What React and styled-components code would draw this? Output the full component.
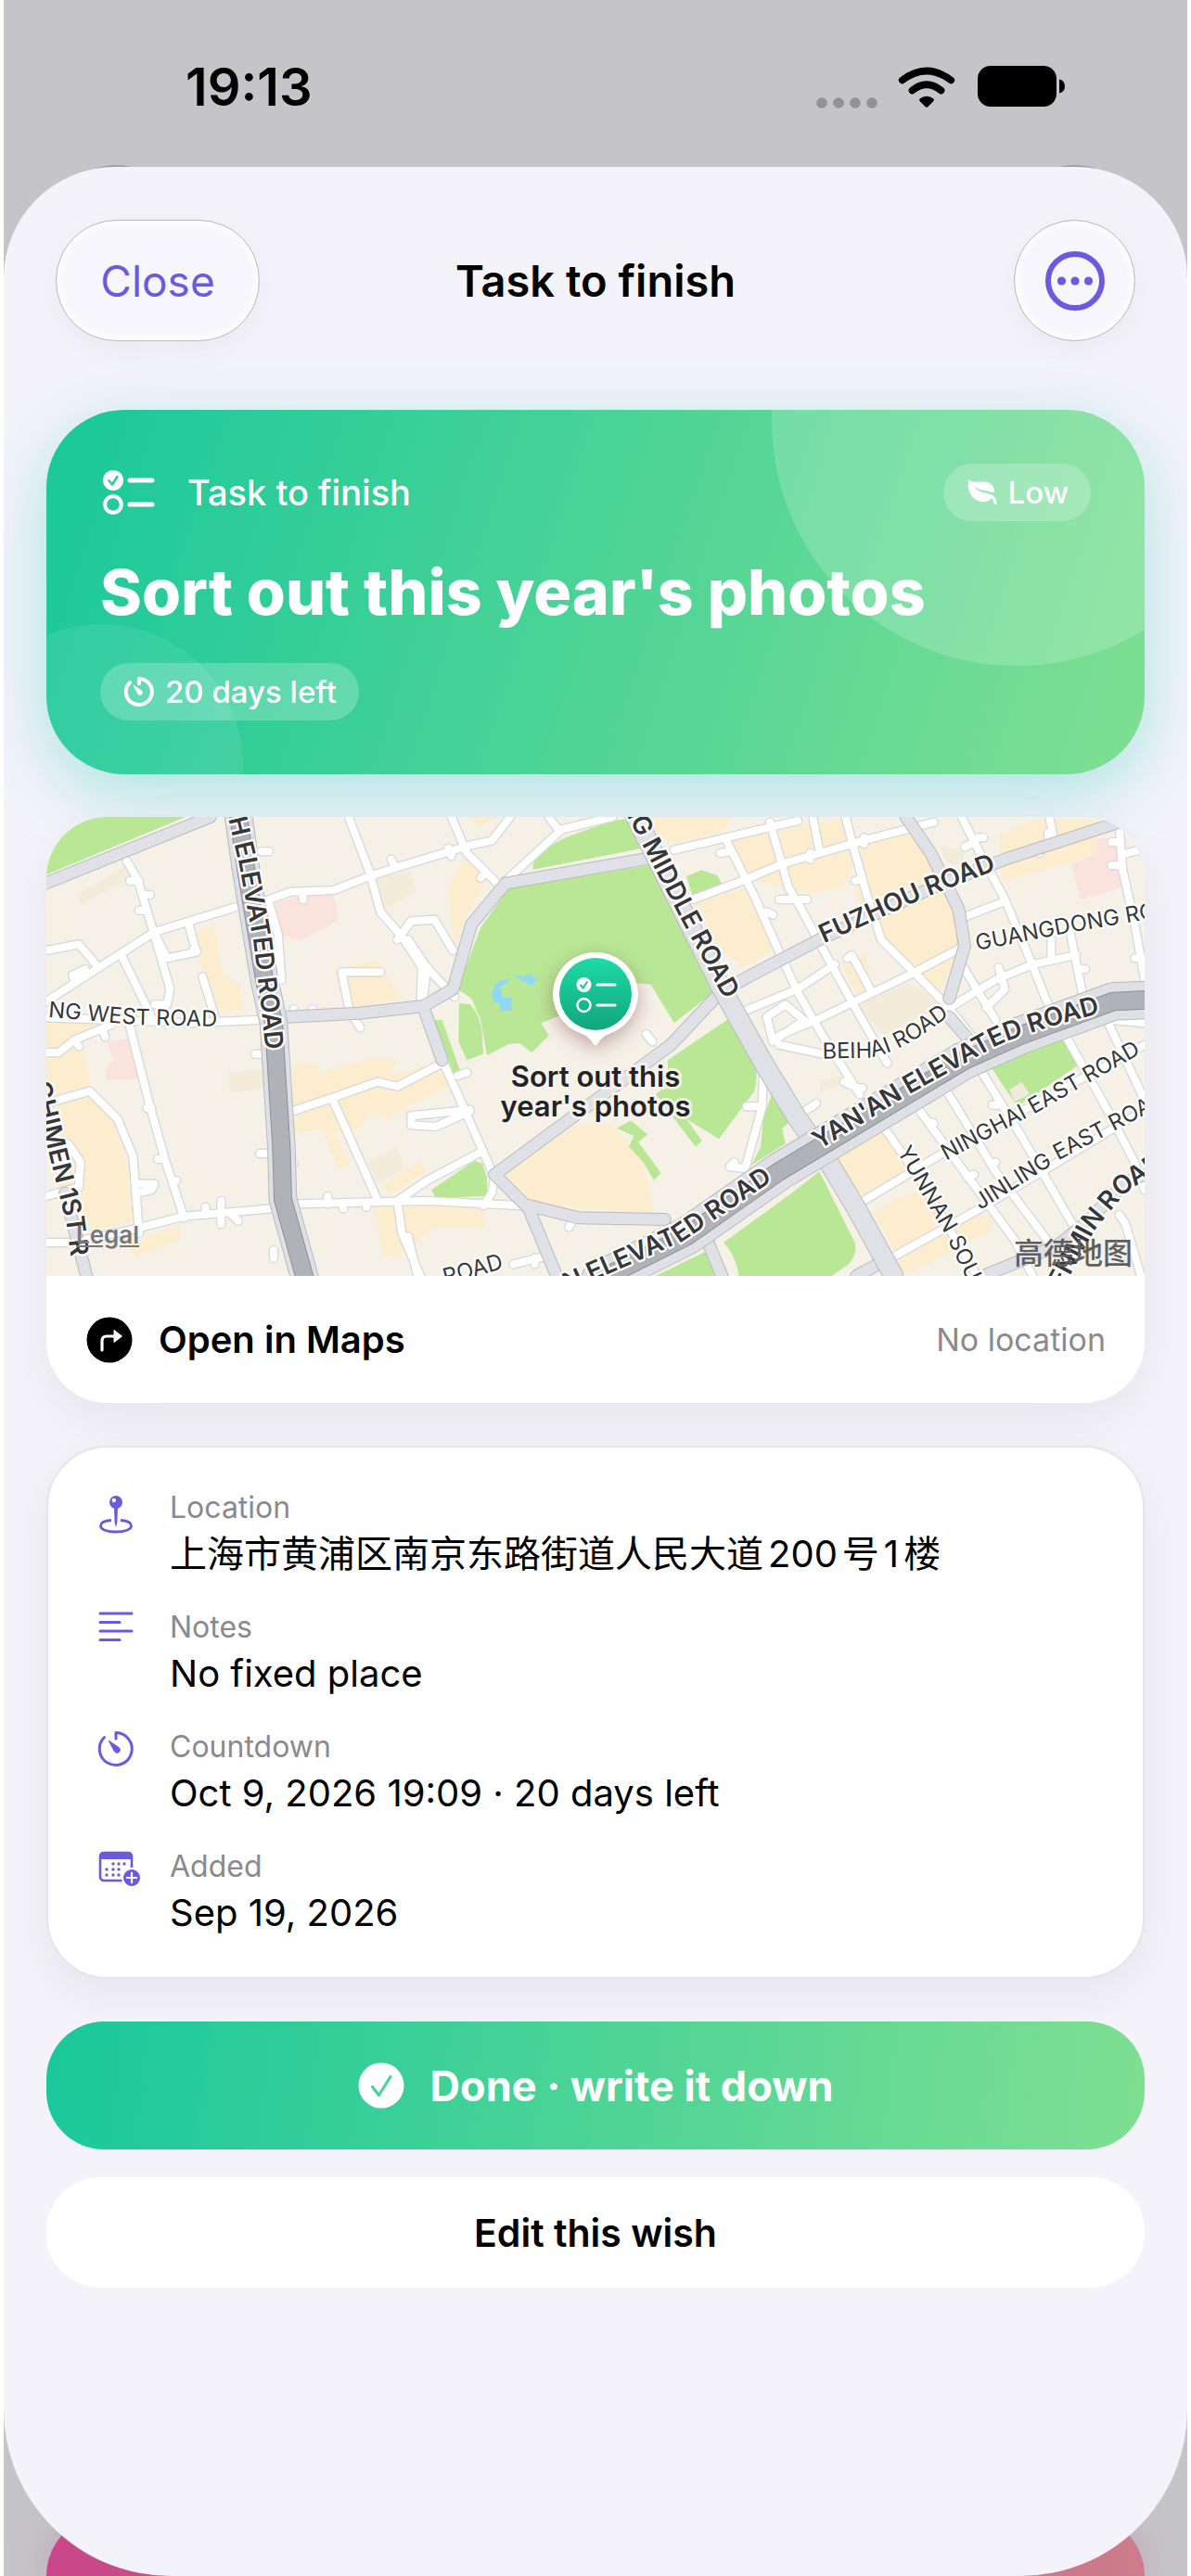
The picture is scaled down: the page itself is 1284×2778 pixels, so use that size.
import { styled, createGlobalStyle } from "styled-components";

const GlobalStyle = createGlobalStyle`
    *, *::before, *::after { box-sizing: border-box; }
    body {
        margin: 0;
        background: #fff;
        font-family: Inter, "Noto Sans CJK SC", sans-serif;
        color: #000;
    }
    h1, h2, p, dl, dt, dd { margin: 0; font-weight: inherit; }
    button { font-family: inherit; border: 0; padding: 0; cursor: pointer; }
    svg { display: block; flex: none; }
`

//Icons
const ChecklistIcon = ({ size, tick }) => (
    <svg width={size} height={size} viewBox="0 0 60 60" aria-hidden="true">
        <circle cx="14" cy="17" r="11" fill="currentColor" />
        <path d="M9.500 17.500l3.500 4 5.500-8.500" fill="none" stroke={tick} strokeWidth="2.600" strokeLinecap="round" strokeLinejoin="round" />
        <circle cx="14" cy="43" r="8.800" fill="none" stroke="currentColor" strokeWidth="4" />
        <path d="M32 17h24M32 43h24" stroke="currentColor" strokeWidth="5" strokeLinecap="round" />
    </svg>
)

const TimerIcon = ({ size, weight, top }) => (
    <svg width={size} height={size} viewBox={`0 ${top} 50 50`} aria-hidden="true">
        <path d="M12.500 11.500A17.500 17.500 0 1 0 25 6.500V13" fill="none" stroke="currentColor" strokeWidth={weight} strokeLinecap="round" strokeLinejoin="round" />
        <path d="M17.200 15.200L27.800 22.300A3.200 3.200 0 1 1 23.300 26.500Z" fill="currentColor" stroke="currentColor" strokeWidth="1" strokeLinejoin="round" />
    </svg>
)

const LeafIcon = () => (
    <svg width="40" height="32" viewBox="-3 0 40 32" aria-hidden="true">
        <path d="M2 2C6 6 12 4.500 18 4.500C26 4.500 30 9 30 16C26 16 22 14.500 17 13.600C14 13 12 12 10.500 10.500C10 10 9.200 10.600 9.700 11.300C12 14.500 15 15.400 19 16.200C23 17 26 18 28.500 20.500C26 24.500 21 27 15.500 26C6 24.200 0 15 2 2Z" fill="currentColor" />
        <path d="M27 20C29.500 22 31 25 31 27.500" fill="none" stroke="currentColor" strokeWidth="3.200" strokeLinecap="round" />
    </svg>
)

const PinIcon = () => (
    <svg width="50" height="50" viewBox="0 0 50 50" aria-hidden="true">
        <path d="M20 32.500C12 33 8.500 35.500 8.500 38.500C8.500 42.500 15.500 45 25 45S41.500 42.500 41.500 38.500C41.500 35.500 38 33 30 32.500" fill="none" stroke="currentColor" strokeWidth="2.800" />
        <path d="M23 18h4l-.600 17L25 40l-1.400-5Z" fill="currentColor" />
        <circle cx="25" cy="13" r="7" fill="currentColor" />
        <circle cx="22.800" cy="11" r="2.200" fill="#fff" />
    </svg>
)

const NotesIcon = () => (
    <svg width="50" height="50" viewBox="0 0 50 50" aria-hidden="true">
        <path d="M8 4h34M8 13.500h21M8 23h34M8 32.500h21" stroke="currentColor" strokeWidth="3" strokeLinecap="round" />
    </svg>
)

const CalendarIcon = () => (
    <svg width="54" height="50" viewBox="0 3 54 50" aria-hidden="true">
        <rect x="8" y="7" width="34" height="30" rx="4" fill="none" stroke="currentColor" strokeWidth="2.600" />
        <path d="M7 11q0-5 5-5h26q5 0 5 5v3H7Z" fill="currentColor" />
        <path d="M22 19h0M28 19h0M34 19h0M15 25h0M22 25h0M28 25h0M15 31h0M22 31h0M28 31h0" stroke="currentColor" strokeWidth="3.400" strokeLinecap="round" />
        <circle cx="42" cy="34" r="11" fill="#fff" />
        <circle cx="42" cy="34" r="9" fill="currentColor" />
        <path d="M42 28.800v10.400M36.800 34h10.400" stroke="#fff" strokeWidth="2.200" strokeLinecap="round" />
    </svg>
)

const TurnIcon = () => (
    <svg width="50" height="50" viewBox="0 0 50 50" aria-hidden="true">
        <circle cx="25" cy="25" r="24.500" />
        <path d="M17 36V26q0-5 5-5h9" fill="none" stroke="#fff" strokeWidth="3.200" strokeLinecap="round" />
        <path d="M30 14.500l8.500 6.500-8.500 6.500Z" fill="#fff" stroke="#fff" strokeLinejoin="round" />
    </svg>
)

const DoneIcon = () => (
    <svg width="50" height="50" viewBox="0 0 50 50" aria-hidden="true">
        <circle cx="25" cy="25" r="24.500" fill="#fff" />
        <path d="M15.500 26.500l7 9 12.500-20" fill="none" stroke="#4fd199" strokeWidth="3.200" strokeLinecap="round" strokeLinejoin="round" />
    </svg>
)

const MoreIcon = () => (
    <svg width="64" height="64" viewBox="0 0 64 64" aria-hidden="true">
        <circle cx="32" cy="32" r="29" fill="none" stroke="currentColor" strokeWidth="6" />
        <g fill="currentColor">
            <circle cx="17.500" cy="32" r="4.600" />
            <circle cx="32" cy="32" r="4.600" />
            <circle cx="46.500" cy="32" r="4.600" />
        </g>
    </svg>
)

const StatusIcons = () => (
    <svg width="270" height="50" viewBox="0 0 270 50" role="img" aria-label="No signal, Wi-Fi on, battery full">
        <g fill="#929196">
            <circle cx="6" cy="43" r="5.800" />
            <circle cx="24" cy="43" r="5.800" />
            <circle cx="42" cy="43" r="5.800" />
            <circle cx="60" cy="43" r="5.800" />
        </g>
        <g fill="none" stroke="#000" strokeLinecap="round">
            <path d="M92.700 18.500Q119 -1.500 145.300 18.500" strokeWidth="7.600" />
            <path d="M103.500 29.500Q119 17 134.500 29.500" strokeWidth="7.800" />
        </g>
        <path d="M111.500 38.500Q119 33 126.500 38.500Q127.500 40 126 41.500L120.500 47Q119 48.500 117.500 47L112 41.500Q110.500 40 111.500 38.500Z" />
        <rect x="174" y="3" width="85" height="44" rx="14" />
        <path d="M262 17.500q6 1.500 6 7.500t-6 7.500Z" />
    </svg>
)

//Map drawing, three units to the pixel
const parks = [
    "M30 33H480L30 220Z",
    "M1525 265L1980 190L2050 320L2135 470L2200 590L2060 700L1985 575L1940 570L1780 640L1630 700L1655 740L1600 795L1560 765L1525 768L1455 805L1435 690L1405 620L1360 590L1435 390Z",
    "M1605 203L1603 185Q1640 130 1720 95L1860 45L1905 40Q1940 90 1955 135Z",
    "M1365 635L1400 640Q1430 670 1438 720L1443 800L1390 820L1363 760Z",
    "M1285 690H1310L1370 860H1345Z",
    "M2040 820L2245 680L2320 800Q2335 860 2320 920L2205 1075L2100 1010L2150 1080L2130 1100L2000 930L2040 900Z",
    "M1275 1240L1415 1145L1440 1155L1455 1200V1260L1290 1265Z",
    "M1875 1040L1920 1015L1950 1040L1975 1060L1945 1085L2018 1185L1995 1208L1960 1150L1915 1100L1930 1065Z",
    "M2350 1000L2385 910L2445 1010L2410 1040L2420 1090L2310 1160L2340 1100Z",
    "M2100 225L2150 205L2200 222L2215 250L2120 290Z",
    "M2220 1410L2440 1250L2530 1180L2640 1400Q2660 1440 2625 1480L2570 1518H2270Q2260 1450 2220 1410Z",
    "M2000 1518L2160 1440L2195 1518Z",
    "M3080 835L3305 733L3370 835L3170 970Z",
]
const blocks = [
    "M510 400L575 390L600 540L655 575L665 660L580 655L520 480Z",
    "M960 530L1100 495L1180 620L1000 655Z",
    "M825 830H910L915 860L1060 820H1165L1140 870L1290 830L1260 930L1140 1010L1080 990L1020 1060L960 1050L1015 1160L975 1170L920 1040L825 1060Z",
    "M30 790L150 780L170 900L200 940L270 1050L320 1340L120 1380L30 1050Z",
    "M30 700H240L90 790H30Z",
    "M1085 1290H1445V1360L1280 1362L1180 1450L1120 1455Z",
    "M1120 1220L1240 1145L1260 1180L1140 1260Z",
    "M290 1420L460 1350L465 1400L320 1455Z",
    "M1380 170L1460 230L1380 370L1350 470L1330 260Z",
    "M1400 33H1490L1420 70Z",
    "M1200 880L1310 830L1340 900L1220 960Z",
    "M1520 1190L1740 1030L1860 1025L1960 1150L1995 1310L1750 1300L1585 1275Z",
    "M1950 33H2250L2220 80L2060 120L2000 90Z",
    "M2120 300L2290 265L2390 460L2280 520L2200 450Z",
    "M2240 110L2620 33L2660 130L2610 260L2500 280L2300 230Z",
    "M2650 130L2830 80L2920 200L3000 430L2920 600L2830 530L2730 430L2650 300Z",
    "M3110 90L3230 40L3430 45V150L3120 245Z",
    "M2580 1130L2730 1040L2840 1180L2670 1270Z",
    "M2700 1310L2850 1240L2950 1330L3090 1320V1370L2800 1518L2770 1430Z",
    "M2600 500L2680 470L2700 580L2650 610Z",
]
const shades = [
    "M130 285L280 195L310 225L140 318Z",
    "M1080 235L1205 210L1225 270L1120 335Z",
    "M615 860L740 850L745 910L625 925Z",
    "M1070 1150L1160 1105L1190 1170L1100 1220Z",
    "M2650 640L2820 570L2930 640L2740 740Z",
    "M2530 885L2600 870V900L2535 925Z",
    "M2920 130L3000 140L2990 190L2940 180Z",
]
const pinks = [
    "M770 310L870 285H960L975 365L855 432L785 415Z",
    "M225 760L300 750L330 880L225 885L220 850L248 820Z",
    "M3345 185L3430 150V105L3490 100L3510 260L3375 300Z",
]
const streets = [
    "M290 175L325 235L375 400L430 590L420 640L380 640",
    "M30 630L200 520L380 405L640 325",
    "M30 465L135 445L190 510",
    "M120 560L115 545L155 525",
    "M275 485L370 680",
    "M375 400L420 490L515 470L490 380",
    "M535 550L575 680",
    "M30 682L300 692L500 700L710 690",
    "M300 710L360 950L410 1130L475 1330",
    "M30 795H70L120 755L240 705",
    "M120 755L135 775M210 720L220 745",
    "M30 960L170 920L260 1010L310 1130L330 1380",
    "M30 1100L100 1090L140 1150L135 1230L30 1260",
    "M320 1220H380L370 1240L325 1250",
    "M300 240H330M365 285H340M330 335H350M515 465H505M355 975H370M390 1140H410M450 1210H440",
    "M750 300L820 275L960 270L1075 225L1200 185L1400 125L1470 110L1530 33",
    "M1010 40L1075 210L1110 340L1180 420L1245 520L1240 640",
    "M1165 430L1210 370L1285 365L1345 465",
    "M1110 535H985L1010 660L1045 715",
    "M725 145H750M860 300V280M1145 170L1155 190M750 310L780 415L790 560",
    "M830 655V670M890 655V670",
    "M30 1410H110L300 1370L475 1325L760 1300",
    "M595 1275V1350M545 1295V1320M630 1320L650 1340",
    "M720 1122H745M705 800H725M830 1155H820M765 1435V1460",
    "M840 1285L1260 1275L1560 1290",
    "M940 1260V1285M990 1300V1285M1065 1295V1280",
    "M825 985L960 940L1100 890L1165 905L1310 830",
    "M955 945L1100 1270",
    "M1165 1275L1180 1380L1240 1518",
    "M1165 1275L1260 1210L1430 1120",
    "M1200 1390L1230 1518",
    "M1340 33L1390 150L1485 245M1435 230L1450 215M1330 135L1340 160",
    "M1655 33L1690 80L1510 245M1690 75L1860 33",
    "M1200 430L1260 520L1350 615M1262 520L1245 640",
    "M1315 830L1360 930L1480 1200L1470 1250L1445 1290M1360 870L1390 860",
    "M1400 980L1210 1000L1210 1030L1290 1035L1400 985",
    "M2350 830L2345 970L2290 1170L2240 1165L2255 1150M2295 970H2340",
    "M1970 735L1990 760M1720 1360L1735 1335M2020 1345L2040 1370",
    "M1540 1480L1640 1455M1610 1460V1480",
    "M2060 140L2250 95L2460 45M2210 150L2240 145",
    "M2230 110L2320 290L2400 470L2460 600L2540 740L2660 930",
    "M2120 300L2280 240L2410 185L2670 110L2900 50",
    "M2370 50L2430 260L2460 310L2530 440L2640 640L2750 830M2360 340L2380 350",
    "M2290 660L2460 590L2580 510M2360 680L2420 640L2480 690L2380 760Z",
    "M2615 33L2640 130L2685 290L2730 430L2830 530L2940 640L3020 740",
    "M2645 240L2660 235M2675 100V120M2500 170V150",
    "M2990 33L3060 170L3130 300L3210 490L3270 640",
    "M3000 130L3020 120M3045 100H3060",
    "M3500 60L3510 200L3550 380L3582 560",
    "M3510 155L3582 135M3475 115H3500M3475 190H3510M3550 490H3582",
    "M2510 40L2530 140",
    "M2400 300H2490",
    "M2400 740L2520 690L2830 540L3000 450",
    "M2620 490L2635 480L2700 600",
    "M2400 770L2540 800",
    "M2990 360L3120 310",
    "M2990 400V510L3100 690",
    "M2960 645L3100 560L3220 510L3360 480",
    "M3340 400L3380 600M3280 430V490M3110 520L3130 590L3070 650M3390 525H3370",
    "M2610 890L2630 900M2660 910H2670M2490 980L2520 960",
    "M2830 950L3020 1210L3160 1400L3220 1518",
    "M2930 900L3100 1180L3280 1420",
    "M3050 850L3180 1060L3360 1370",
    "M2740 1040L2840 1180L3040 1518M3090 965H3110M3085 1155L3100 1150M2890 1020L2900 1025M3010 1200L3030 1190",
    "M3315 720L3450 960L3550 1150L3582 1240",
    "M3460 690L3582 950M3480 690L3582 700",
    "M2665 1280L2930 1120L3230 960L3582 770",
    "M2780 1450L3050 1300L3300 1150L3582 980",
    "M3500 1320L3520 1350L3570 1518",
    "M3275 40L3290 110M3270 95V85M3240 150V140",
]
const avenues = [
    "M10 255L560 33",
    "M1990 165L1515 248L1405 380L1345 590L1250 645L1040 668L805 680",
    "M1250 650L1310 820",
    "M1480 1190L2050 770L2210 600L2300 550L2530 430L2900 260L3130 170L3500 50",
    "M1480 1190L1590 1300L1680 1518",
    "M1590 1290L1750 1330L2030 1335",
    "M2810 33L2890 150L2980 330L3000 450L2950 620",
    "M2950 680L3010 750",
    "M3060 1518L3300 1420L3400 1340L3520 1215L3582 1190",
    "M2170 1410L2215 1518",
    "M2650 1518L2720 1480",
    "M90 1250L160 1518",
]
const middleRoad = "M1930 20L2030 220L2210 580L2350 830L2460 1010L2560 1150L2650 1300L2770 1518"
const northSouth = "M650 20L675 200L735 560L765 700L790 1100L795 1270L870 1540"
const yanan = "M1820 1530L2100 1390L2400 1180L2550 1090L3000 820L3180 740L3480 630L3590 625"

const labels = [
    { id: "west", d: "M35 680L320 705L640 712", text: "NG WEST ROAD" },
    { id: "elev", d: "M606 -14L652 180L700 440L725 650L750 900", text: "TH ELEVATED ROAD", strong: true },
    { id: "chimen", d: "M-16 895L60 1210L95 1350L125 1580", text: "CHIMEN 1ST R", strong: true },
    { id: "middle", d: "M1888 -10L2075 350L2270 710", text: "NG MIDDLE ROAD", strong: true },
    { id: "fuzhou", d: "M2545 442L2880 290L3180 175", text: "FUZHOU ROAD", strong: true },
    { id: "guangdong", d: "M3040 465L3350 405L3680 350", text: "GUANGDONG ROAD" },
    { id: "beihai", d: "M2540 815L2690 812Q2770 800 2860 740L3030 620", text: "BEIHAI ROAD" },
    { id: "yanan", d: "M2530 1110L2830 925L3100 775Q3200 725 3550 640", text: "YAN'AN ELEVATED ROAD", strong: true },
    { id: "ninghai", d: "M2940 1145L3240 985L3700 725", text: "NINGHAI EAST ROAD" },
    { id: "jinling", d: "M3050 1305L3320 1135L3700 935", text: "JINLING EAST ROAD" },
    { id: "yunnan", d: "M2780 1115L2930 1370L3080 1680", text: "YUNNAN SOUTH" },
    { id: "renmin", d: "M3290 1610L3420 1370L3520 1250L3680 1140", text: "RENMIN ROAD", strong: true },
    { id: "yanan2", d: "M1715 1570L2090 1405L2430 1175", text: "N ELEVATED ROAD", strong: true },
    { id: "road", d: "M1320 1546L1580 1474", text: "ROAD" },
]

const draw = (list) => list.map((d) => <path key={d} d={d} />)

const CityMap = () => (
    <MapDrawing viewBox="30 33 3552 1485" preserveAspectRatio="xMidYMid slice" role="img" aria-label="Map of the area">
        <rect x="30" y="33" width="3552" height="1485" fill="#f5f1e7" />
        <g fill="#fcedcf">{draw(blocks)}</g>
        <g fill="#f4ecda">{draw(shades)}</g>
        <g fill="#fae2dd">{draw(pinks)}</g>
        <g fill="#b9e795">{draw(parks)}</g>
        <path d="M3145 915L3185 890L3210 930L3160 955Z" fill="#f0eade" />
        <path d="M1470 600L1490 565L1525 555V568L1500 580L1505 618H1535V660H1497V640L1475 628ZM1537 542L1575 550L1590 540L1617 558L1600 580L1565 562Z" fill="#8fd8f7" />
        <g fill="none" strokeLinecap="round" strokeLinejoin="round">
            <g stroke="#d8d8dc" strokeWidth="32">{draw(streets)}</g>
            <g stroke="#fff" strokeWidth="24">{draw(streets)}</g>
            <g stroke="#b9babf" strokeWidth="42">{draw(avenues)}</g>
            <g stroke="#e0e1e6" strokeWidth="36">{draw(avenues)}</g>
            <path d={middleRoad} stroke="#b9babf" strokeWidth="66" />
            <path d={middleRoad} stroke="#e0e1e6" strokeWidth="60" />
            <path d={northSouth} stroke="#b9babf" strokeWidth="92" />
            <path d={northSouth} stroke="#dfe0e5" strokeWidth="86" />
            <path d={northSouth} stroke="#8f9096" strokeWidth="60" />
            <path d={northSouth} stroke="#b1b2b8" strokeWidth="54" />
            <path d={yanan} stroke="#b9babf" strokeWidth="124" />
            <path d={yanan} stroke="#dfe0e5" strokeWidth="118" />
            <path d={yanan} stroke="#8f9096" strokeWidth="62" />
            <path d={yanan} stroke="#b1b2b8" strokeWidth="56" />
        </g>
        {labels.map((label) => (
            <RoadName key={label.id} $strong={label.strong}>
                <path id={label.id} d={label.d} fill="none" stroke="none" />
                <text><textPath href={"#" + label.id}>{label.text}</textPath></text>
            </RoadName>
        ))}
    </MapDrawing>
)

const MarkerPin = () => (
    <svg width="94" height="106" viewBox="0 0 94 106" aria-hidden="true">
        <defs>
            <linearGradient id="pin" x1="0" y1="0" x2="0" y2="1">
                <stop offset="0" stopColor="#1fdaa6" />
                <stop offset="1" stopColor="#12a57c" />
            </linearGradient>
        </defs>
        <path d="M47 2A45 45 0 0 0 30 89C38 92 41 95 45.500 101.500Q47 103.500 48.500 101.500C53 95 56 92 64 89A45 45 0 0 0 47 2Z" fill="#fff" />
        <circle cx="47" cy="47" r="39" fill="url(#pin)" />
        <g fill="none" stroke="#fff" strokeLinecap="round">
            <circle cx="34.500" cy="37" r="8" fill="#fff" stroke="none" />
            <path d="M31 37.500l2.800 3 4-6.500" stroke="#1cc797" strokeWidth="2" />
            <circle cx="34.500" cy="59" r="7" strokeWidth="2.400" />
            <path d="M49 37h19M49 59h19" strokeWidth="3.200" />
        </g>
    </svg>
)

const details = [
    { label: "Location", value: "上海市黄浦区南京东路街道人民大道200号1楼", icon: <PinIcon /> },
    { label: "Notes", value: "No fixed place", icon: <NotesIcon /> },
    { label: "Countdown", value: "Oct 9, 2026 19:09 · 20 days left", icon: <TimerIcon size="50" weight="3" top="3" /> },
    { label: "Added", value: "Sep 19, 2026", icon: <CalendarIcon /> },
]

const App = () => {
    return (
        <Screen>
            <GlobalStyle />
            <StatusBar>
                <Clock>19:13</Clock>
                <StatusIcons />
            </StatusBar>
            <GhostButton $side="left" />
            <GhostButton $side="right" />
            <GhostCard />
            <Sheet>
                <Header>
                    <GlassButton type="button">Close</GlassButton>
                    <SheetTitle>Task to finish</SheetTitle>
                    <GlassButton type="button" $round aria-label="More"><MoreIcon /></GlassButton>
                </Header>

                <Hero>
                    <HeroTop>
                        <ChecklistIcon size="60" tick="#2bcb9a" />
                        <Kind>Task to finish</Kind>
                        <Pill><LeafIcon />Low</Pill>
                    </HeroTop>
                    <HeroTitle>Sort out this year's photos</HeroTitle>
                    <Pill><TimerIcon size="40" weight="5" top="-1" />20 days left</Pill>
                </Hero>

                <MapCard>
                    <MapArea>
                        <CityMap />
                        <Marker>
                            <MarkerPin />
                            <MarkerName>Sort out this<br />year's photos</MarkerName>
                        </Marker>
                        <Legal href="#legal">Legal</Legal>
                        <Provider>高德地图</Provider>
                    </MapArea>
                    <OpenRow href="#maps">
                        <TurnIcon />
                        <OpenText>Open in Maps</OpenText>
                        <Hint>No location</Hint>
                    </OpenRow>
                </MapCard>

                <Details>
                    {details.map((item) => (
                        <Detail key={item.label}>
                            <DetailIcon>{item.icon}</DetailIcon>
                            <DetailLabel>{item.label}</DetailLabel>
                            <DetailValue>{item.value}</DetailValue>
                        </Detail>
                    ))}
                </Details>

                <Actions>
                    <DoneButton type="button"><DoneIcon />Done · write it down</DoneButton>
                    <EditButton type="button">Edit this wish</EditButton>
                </Actions>
            </Sheet>
        </Screen>
    );
}

export default App;

//Page behind the sheet
const Screen = styled.div`
    position: relative;
    display: flex;
    flex-direction: column;
    min-height: 100vh;
    overflow: hidden;
    background: #c5c4c9;
    border: solid #fff;
    border-width: 0 4px;
`

const StatusBar = styled.div`
    display: flex;
    justify-content: space-between;
    align-items: flex-start;
    height: 180px;
    padding: 68px 130px 0 196px;
`

const Clock = styled.span`
    font-size: 56px;
    line-height: 52px;
    font-weight: 600;
`

const GhostButton = styled.div`
    position: absolute;
    top: 178px;
    ${(props) => props.$side}: 56px;
    width: 130px;
    height: 130px;
    border: 2px solid #a09fa5;
    border-radius: 50%;
`

const GhostCard = styled.div`
    position: absolute;
    bottom: 0;
    left: 46px;
    right: 46px;
    height: 66px;
    border-radius: 66px 66px 0 0;
    background: linear-gradient(90deg, #c94788, #cc7c8b);
    box-shadow: 0 0 40px rgba(190, 90, 130, 0.3);
`

const Sheet = styled.main`
    position: relative;
    flex: 1;
    padding: 57px 46px 200px;
    background: #f4f3fa;
    border-radius: 120px 120px 180px 180px;
`

const Header = styled.header`
    display: grid;
    grid-template-columns: 1fr auto 1fr;
    align-items: center;
    padding: 0 10px;
    margin-bottom: 74px;
`

const GlassButton = styled.button`
    display: flex;
    align-items: center;
    justify-content: center;
    justify-self: ${(props) => (props.$round ? "end" : "start")};
    width: ${(props) => (props.$round ? "131px" : "220px")};
    height: 131px;
    border: 1px solid #b9b8be;
    border-radius: 66px;
    background: #f7f6fc;
    box-shadow: 0 10px 30px rgba(60, 50, 110, 0.05), inset 0 0 10px 3px #fff;
    color: #6a5adf;
    font-size: 46px;
`

const SheetTitle = styled.h1`
    font-size: 47px;
    line-height: 56px;
    font-weight: 600;
`

//Green summary card
const Hero = styled.section`
    position: relative;
    overflow: hidden;
    display: flex;
    flex-direction: column;
    align-items: flex-start;
    padding: 58px;
    border-radius: 84px;
    background: linear-gradient(108deg, #19c89b, #7fdf92);
    box-shadow: 0 20px 72px rgba(28, 200, 180, 0.34);
    color: #fff;

    &::before, &::after {
        content: "";
        position: absolute;
        border-radius: 50%;
    }
    &::before {
        top: -252px;
        right: -126px;
        width: 528px;
        height: 528px;
        background: rgba(255, 255, 255, 0.18);
    }
    &::after {
        bottom: -144px;
        left: -94px;
        width: 306px;
        height: 306px;
        background: rgba(255, 255, 255, 0.08);
    }
    > * { z-index: 1; }
`

const HeroTop = styled.div`
    display: flex;
    align-items: center;
    align-self: stretch;
    height: 62px;
    gap: 34px;
`

const Kind = styled.p`
    flex: 1;
    font-size: 38px;
    font-weight: 500;
`

const HeroTitle = styled.h2`
    margin: 34px 0 35px;
    font-size: 68px;
    line-height: 84px;
    font-weight: 800;
`

const Pill = styled.span`
    display: flex;
    align-items: center;
    gap: 8px;
    height: 62px;
    padding: 0 24px 0 22px;
    border-radius: 31px;
    background: rgba(255, 255, 255, 0.22);
    font-size: 33px;
    font-weight: 500;
`

//Map card
const MapCard = styled.section`
    position: relative;
    overflow: hidden;
    margin-top: 46px;
    border-radius: 66px;
    background: #fff;
    box-shadow: 0 18px 54px rgba(20, 20, 40, 0.06);
`

const MapArea = styled.div`
    position: relative;
    height: 495px;
`

const MapDrawing = styled.svg`
    width: 100%;
    height: 100%;
`

const RoadName = styled.g`
    fill: #37373a;
    stroke: #fff;
    stroke-width: 14px;
    stroke-linejoin: round;
    paint-order: stroke;
    font-size: ${(props) => (props.$strong ? "83px" : "71px")};
    font-weight: ${(props) => (props.$strong ? 600 : 400)};
`

const Marker = styled.div`
    position: absolute;
    top: 144px;
    left: 0;
    right: 0;
    display: flex;
    flex-direction: column;
    align-items: center;
    gap: 14px;

    svg { filter: drop-shadow(0 6px 10px rgba(120, 50, 60, 0.4)); }
`

const MarkerName = styled.p`
    font-size: 31px;
    line-height: 32px;
    font-weight: 600;
    text-align: center;
    color: #222326;
    -webkit-text-stroke: 6px rgba(247, 244, 236, 0.9);
    paint-order: stroke;
`

const Legal = styled.a`
    position: absolute;
    left: 32px;
    bottom: 28px;
    font-size: 26px;
    line-height: 32px;
    font-weight: 600;
    color: #77767a;
`

const Provider = styled.span`
    position: absolute;
    right: 13px;
    bottom: 9px;
    font-family: "Noto Sans CJK SC", sans-serif;
    font-size: 32px;
    line-height: 36px;
    font-weight: 500;
    color: #5f5f61;
`

const OpenRow = styled.a`
    display: flex;
    align-items: center;
    gap: 28px;
    height: 137px;
    padding: 0 42px 0 43px;
    color: #000;
    text-decoration: none;
`

const OpenText = styled.span`
    flex: 1;
    font-size: 40px;
    font-weight: 600;
`

const Hint = styled.span`
    font-size: 34px;
    color: #8a8a8e;
`

//Details list
const Details = styled.dl`
    display: grid;
    gap: 35px;
    margin-top: 46px;
    padding: 46px 48px 44px;
    border: 2px solid #e6e5eb;
    border-radius: 66px;
    background: #fff;
    box-shadow: 0 18px 54px rgba(20, 20, 40, 0.06);
`

const Detail = styled.div`
    display: grid;
    grid-template-columns: 50px 1fr;
    column-gap: 33px;
    row-gap: 6px;
`

const DetailIcon = styled.span`
    grid-row: 1 / 3;
    color: #6a5adf;
`

const DetailLabel = styled.dt`
    font-size: 32px;
    line-height: 38px;
    color: #8a8a8e;
`

const DetailValue = styled.dd`
    font-size: 40px;
    line-height: 50px;
    text-autospace: normal;
`

//Buttons
const Actions = styled.div`
    display: grid;
    gap: 30px;
    margin-top: 46px;
`

const DoneButton = styled.button`
    display: flex;
    align-items: center;
    justify-content: center;
    gap: 28px;
    height: 138px;
    border-radius: 62px;
    background: linear-gradient(97deg, #19c89b, #7fdf92);
    color: #fff;
    font-size: 45px;
    font-weight: 700;
`

const EditButton = styled.button`
    height: 119px;
    border-radius: 58px;
    background: #fff;
    color: #000;
    font-size: 41px;
    font-weight: 600;
`
